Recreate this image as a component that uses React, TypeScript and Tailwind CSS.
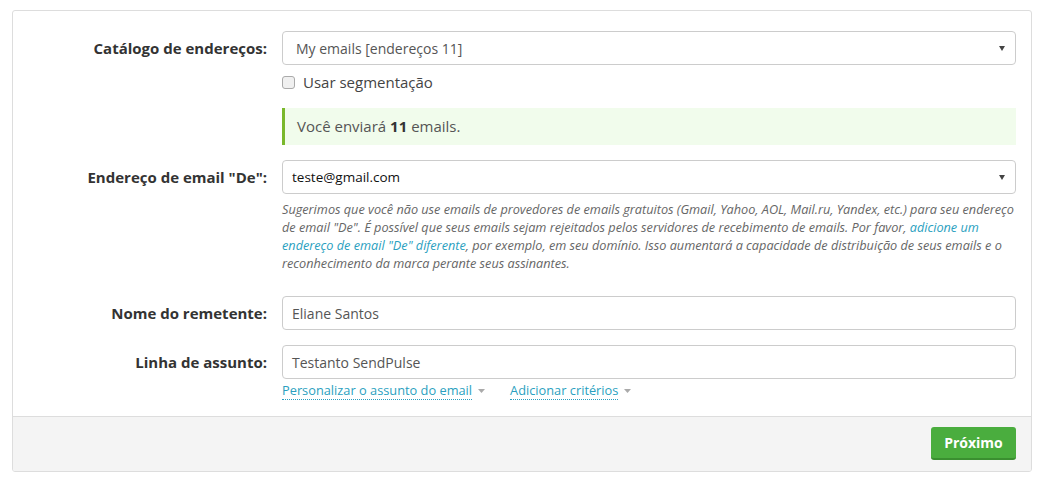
const Caret = ({ className }: { className: string }) => (
    <svg width="7" height="4" viewBox="0 0 7 4" className={className}>
        <path d="M0 0h7L3.5 4z" fill="currentColor" />
    </svg>
)

const Label = ({ children }: { children: React.ReactNode }) => (
    <div className="w-[269px] shrink-0 h-[34px] flex items-center justify-end pr-[15px] text-[15px] font-bold text-[#333]">
        {children}
    </div>
)

const SelectBox = ({ value, dark }: { value: string; dark?: boolean }) => (
    <div className="h-[34px] flex items-center justify-between border border-[#ccc] rounded-[4px] bg-white pr-[10px]">
        <span className={dark ? 'pl-[9px] text-[13.5px] text-[#111]' : 'pl-[13px] text-[14px] text-[#555]'}>{value}</span>
        <svg width="6" height="5" viewBox="0 0 6 5" className="text-[#444]">
            <path d="M0 0h6L3 5z" fill="currentColor" />
        </svg>
    </div>
)

const TextInput = ({ value }: { value: string }) => (
    <div className="h-[34px] flex items-center border border-[#ccc] rounded-[4px] bg-white pl-[9px] text-[14px] text-[#555]">
        {value}
    </div>
)

const App = () => {
    return (
        <div className="pt-[10px] pl-[12px] bg-white min-h-screen" style={{ fontFamily: '"Open Sans", sans-serif' }}>
            <div className="w-[1020px] border border-[#ddd] rounded-[3px] overflow-hidden">
                <div className="pt-[20px] pb-[16px] pr-[15px]">
                    <div className="flex">
                        <Label>Catálogo de endereços:</Label>
                        <div className="flex-1">
                            <SelectBox value="My emails [endereços 11]" />
                            <label className="mt-[7px] h-[20px] flex items-center gap-[8px] text-[15px] text-[#444]">
                                <span className="w-[13px] h-[13px] rounded-[3px] border border-[#aaa] bg-[#f0f0f0]" />
                                Usar segmentação
                            </label>
                            <div className="mt-[16px] h-[37px] flex items-center pl-[12px] border-l-[3px] border-[#7ab82c] bg-[#f1fcec] text-[15px] text-[#555]">
                                Você enviará&nbsp;<b className="text-[#333]">11</b>&nbsp;emails.
                            </div>
                        </div>
                    </div>

                    <div className="flex mt-[15px]">
                        <Label>Endereço de email "De":</Label>
                        <div className="flex-1">
                            <SelectBox value="teste@gmail.com" dark />
                            <p className="mt-[6px] text-[12.7px] leading-[18px] italic text-[#666] whitespace-nowrap">
                                Sugerimos que você não use emails de provedores de emails gratuitos (Gmail, Yahoo, AOL, Mail.ru, Yandex, etc.) para seu endereço
                                <br />
                                de email "De". É possível que seus emails sejam rejeitados pelos servidores de recebimento de emails. Por favor,{' '}
                                <a className="text-[#2a9fc0]">adicione um</a>
                                <br />
                                <a className="text-[#2a9fc0]">endereço de email "De" diferente</a>, por exemplo, em seu domínio. Isso aumentará a capacidade de distribuição de seus emails e o
                                <br />
                                reconhecimento da marca perante seus assinantes.
                            </p>
                        </div>
                    </div>

                    <div className="flex mt-[24px]">
                        <Label>Nome do remetente:</Label>
                        <div className="flex-1">
                            <TextInput value="Eliane Santos" />
                        </div>
                    </div>

                    <div className="flex mt-[15px]">
                        <Label>Linha de assunto:</Label>
                        <div className="flex-1">
                            <TextInput value="Testanto SendPulse" />
                            <div className="mt-[2px] flex items-center gap-[25px] text-[12.8px] leading-[18px] text-[#2a9fc0]">
                                <span className="flex items-center gap-[6px]">
                                    <span className="border-b border-dotted border-[#2a9fc0]">Personalizar o assunto do email</span>
                                    <Caret className="text-[#aaa]" />
                                </span>
                                <span className="flex items-center gap-[6px]">
                                    <span className="border-b border-dotted border-[#2a9fc0]">Adicionar critérios</span>
                                    <Caret className="text-[#aaa]" />
                                </span>
                            </div>
                        </div>
                    </div>
                </div>

                <div className="border-t border-[#ddd] bg-[#f4f4f4] pt-[10px] pb-[11px] pr-[15px] flex justify-end">
                    <button className="h-[33px] w-[85px] rounded-[3px] bg-[#4aad3e] border-b-2 border-[#3a8f30] text-white text-[14px] font-bold">
                        Próximo
                    </button>
                </div>
            </div>
        </div>
    )
}

export default App
